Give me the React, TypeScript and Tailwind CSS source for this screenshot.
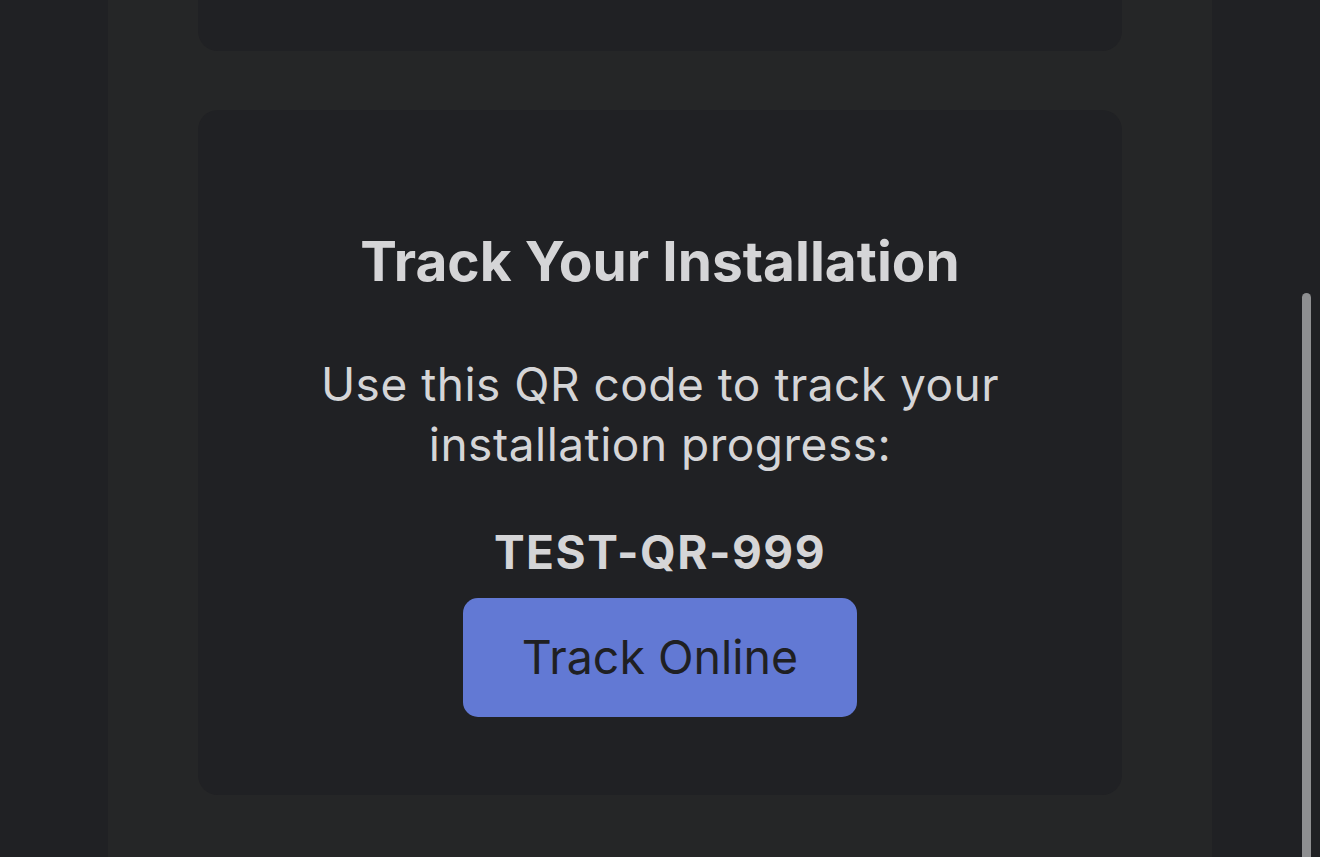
import React from "react";

export default function App() {
  return (
    <div
      className="relative h-[857px] w-full overflow-hidden bg-[#202124]"
      style={{ fontFamily: "Inter, 'Noto Sans', sans-serif" }}
    >
      <div className="mx-auto flex h-full w-[1104px] flex-col bg-[#252627] px-[90px]">
        <div className="h-[51px] rounded-b-[20px] bg-[#202124]" />
        <div className="mt-[59px] flex h-[685px] flex-col items-center rounded-[20px] bg-[#202124] pt-[117px] text-center">
          <h1 className="text-[55px] font-bold leading-[68px] text-[#d5d5d7]">
            Track Your Installation
          </h1>
          <p className="mt-[59px] w-[720px] text-[46px] leading-[60px] tracking-[0.5px] text-[#d5d5d7]">
            Use this QR code to track your installation progress:
          </p>
          <div className="mt-[48px] text-[46px] font-bold leading-[60px] tracking-[1.5px] text-[#d5d5d7]">
            TEST-QR-999
          </div>
          <button className="mt-[16px] flex h-[119px] w-[394px] items-center justify-center rounded-[15px] bg-[#6279d4] text-[46.5px] text-[#1f2023]">
            Track Online
          </button>
        </div>
      </div>
      <div className="absolute right-[9px] top-[293px] h-[600px] w-[9px] rounded-full bg-[#8e8f91]" />
    </div>
  );
}
